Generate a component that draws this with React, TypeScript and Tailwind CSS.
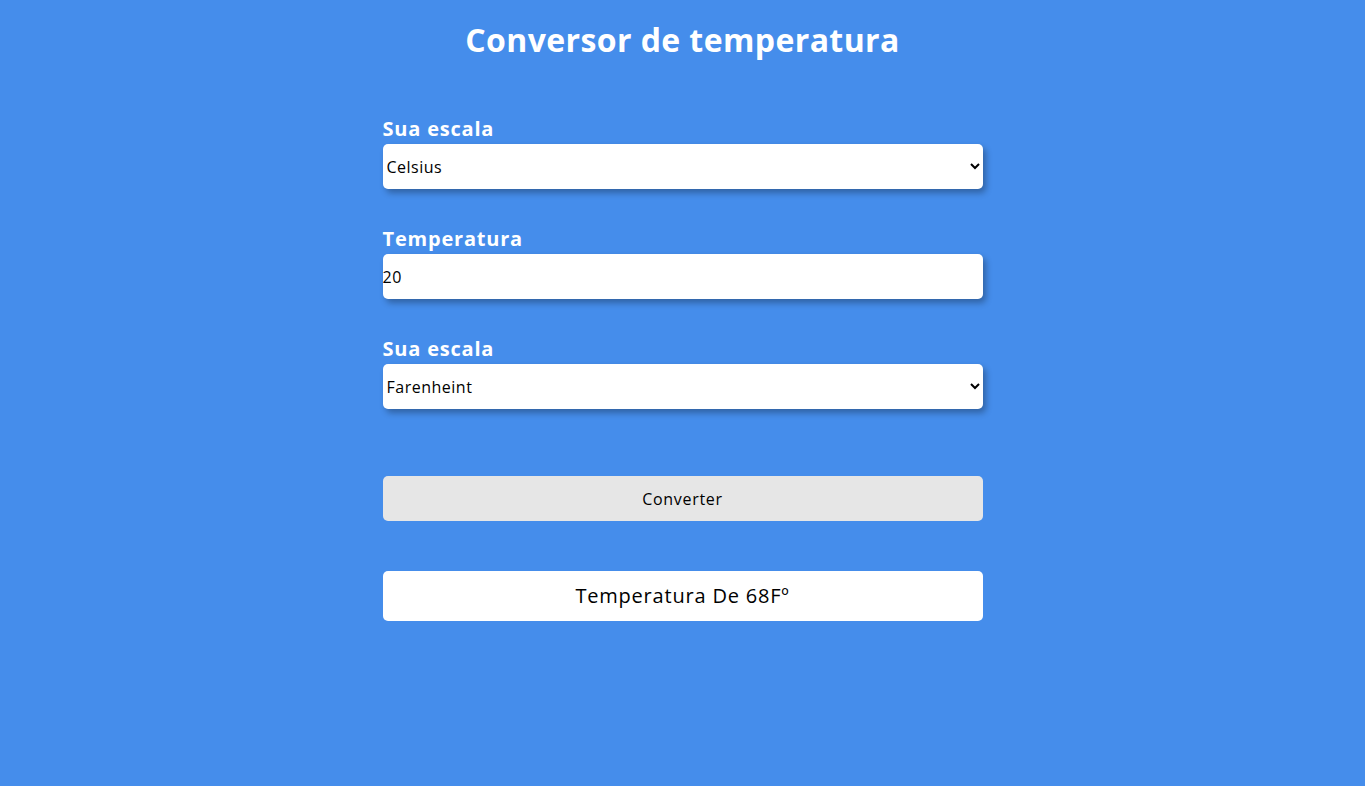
import { useState } from "react";

const SCALES = ["Celsius", "Farenheint", "Kelvin"];

function Field({ label, children }: { label: string; children: React.ReactNode }) {
  return (
    <div className="flex flex-col">
      <label className="text-[20px] leading-[30px] font-bold tracking-[0.8px] text-white">{label}</label>
      {children}
    </div>
  );
}

export default function App() {
  const [from, setFrom] = useState("Celsius");
  const [to, setTo] = useState("Farenheint");
  const [temp, setTemp] = useState("20");

  return (
    <div
      className="min-h-[786px] w-full bg-[#458deb] flex flex-col items-center pt-4"
      style={{ fontFamily: "'Open Sans', 'Liberation Sans', sans-serif" }}
    >
      <h1 className="text-[32px] leading-[48px] font-bold tracking-[0.4px] text-white">Conversor de temperatura</h1>

      <div className="mt-[50px] w-[600px] flex flex-col gap-[35px]">
        <Field label="Sua escala">
          <select
            value={from}
            onChange={(e) => setFrom(e.target.value)}
            className="h-[45px] w-full bg-white text-black text-[16px] tracking-[0.5px] rounded-[5px] shadow-[3px_4px_6px_rgba(0,0,0,0.3)] outline-none"
          >
            {SCALES.map((s) => (
              <option key={s}>{s}</option>
            ))}
          </select>
        </Field>

        <Field label="Temperatura">
          <input
            value={temp}
            onChange={(e) => setTemp(e.target.value)}
            className="h-[45px] w-full bg-white text-black text-[16px] tracking-[0.5px] rounded-[5px] shadow-[3px_4px_6px_rgba(0,0,0,0.3)] outline-none"
          />
        </Field>

        <Field label="Sua escala">
          <select
            value={to}
            onChange={(e) => setTo(e.target.value)}
            className="h-[45px] w-full bg-white text-black text-[16px] tracking-[0.5px] rounded-[5px] shadow-[3px_4px_6px_rgba(0,0,0,0.3)] outline-none"
          >
            {SCALES.map((s) => (
              <option key={s}>{s}</option>
            ))}
          </select>
        </Field>
      </div>

      <button className="mt-[67px] w-[600px] h-[45px] bg-[#e6e6e6] rounded-[5px] text-[16px] tracking-[0.7px] text-black">
        Converter
      </button>

      <div className="mt-[50px] w-[600px] h-[50px] bg-white rounded-[5px] flex items-center justify-center text-[20px] font-medium tracking-[0.8px] text-black">
        Temperatura De 68Fº
      </div>
    </div>
  );
}
